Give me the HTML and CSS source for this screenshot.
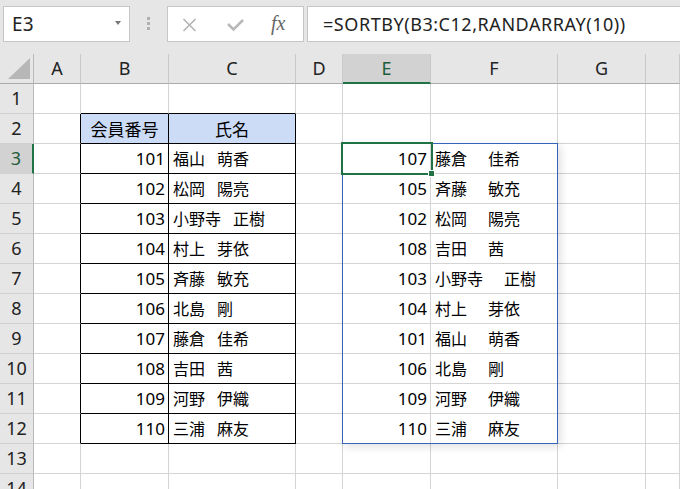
FILE: index.html
```html
<!DOCTYPE html>
<html lang="ja">
<head>
<meta charset="utf-8">
<title>SORTBY</title>
<link rel="stylesheet" href="styles.css">
</head>
<body>
<div class="bar">
  <div class="namebox"><span class="ref">E3</span><span class="caret"></span></div>
  <div class="grip"><i></i><i></i><i></i></div>
  <div class="fxbox">
    <svg class="ic-x" width="15" height="14" viewBox="0 0 15 14"><path d="M1.5 1 L13.5 13 M13.5 1 L1.5 13" stroke="#b3b3b3" stroke-width="1.6" fill="none"/></svg>
    <svg class="ic-ok" width="17" height="14" viewBox="0 0 17 14"><path d="M1 6 L6.5 11.5 L16 2" stroke="#b8b8b8" stroke-width="2.6" fill="none"/></svg>
    <span class="fx">fx</span>
  </div>
  <div class="formula">=SORTBY(B3:C12,RANDARRAY(10))</div>
</div>
<div class="sheet">
  <div class="corner"><span class="tri"></span></div>
  <div class="ch">A</div><div class="ch">B</div><div class="ch">C</div><div class="ch">D</div><div class="ch sel">E</div><div class="ch">F</div><div class="ch">G</div><div class="ch"></div>

  <div class="rh">1</div><div class="c"></div><div class="c bb"></div><div class="c bb"></div><div class="c"></div><div class="c"></div><div class="c"></div><div class="c"></div><div class="c"></div>

  <div class="rh">2</div><div class="c br"></div><div class="c jp th br bb">会員番号</div><div class="c jp th br bb">氏名</div><div class="c"></div><div class="c"></div><div class="c"></div><div class="c"></div><div class="c"></div>

  <div class="rh sel">3</div><div class="c br"></div><div class="c num br bb">101</div><div class="c jp br bb">福山 萌香</div><div class="c"></div><div class="c num anchor">107<div class="spill"></div><div class="active"><span class="handle"></span></div></div><div class="c jp wide">藤倉 佳希</div><div class="c"></div><div class="c"></div>

  <div class="rh">4</div><div class="c br"></div><div class="c num br bb">102</div><div class="c jp br bb">松岡 陽亮</div><div class="c"></div><div class="c num">105</div><div class="c jp wide">斉藤 敏充</div><div class="c"></div><div class="c"></div>

  <div class="rh">5</div><div class="c br"></div><div class="c num br bb">103</div><div class="c jp br bb">小野寺 正樹</div><div class="c"></div><div class="c num">102</div><div class="c jp wide">松岡 陽亮</div><div class="c"></div><div class="c"></div>

  <div class="rh">6</div><div class="c br"></div><div class="c num br bb">104</div><div class="c jp br bb">村上 芽依</div><div class="c"></div><div class="c num">108</div><div class="c jp wide">吉田 茜</div><div class="c"></div><div class="c"></div>

  <div class="rh">7</div><div class="c br"></div><div class="c num br bb">105</div><div class="c jp br bb">斉藤 敏充</div><div class="c"></div><div class="c num">103</div><div class="c jp wide">小野寺 正樹</div><div class="c"></div><div class="c"></div>

  <div class="rh">8</div><div class="c br"></div><div class="c num br bb">106</div><div class="c jp br bb">北島 剛</div><div class="c"></div><div class="c num">104</div><div class="c jp wide">村上 芽依</div><div class="c"></div><div class="c"></div>

  <div class="rh">9</div><div class="c br"></div><div class="c num br bb">107</div><div class="c jp br bb">藤倉 佳希</div><div class="c"></div><div class="c num">101</div><div class="c jp wide">福山 萌香</div><div class="c"></div><div class="c"></div>

  <div class="rh">10</div><div class="c br"></div><div class="c num br bb">108</div><div class="c jp br bb">吉田 茜</div><div class="c"></div><div class="c num">106</div><div class="c jp wide">北島 剛</div><div class="c"></div><div class="c"></div>

  <div class="rh">11</div><div class="c br"></div><div class="c num br bb">109</div><div class="c jp br bb">河野 伊織</div><div class="c"></div><div class="c num">109</div><div class="c jp wide">河野 伊織</div><div class="c"></div><div class="c"></div>

  <div class="rh">12</div><div class="c br"></div><div class="c num br bb">110</div><div class="c jp br bb">三浦 麻友</div><div class="c"></div><div class="c num">110</div><div class="c jp wide">三浦 麻友</div><div class="c"></div><div class="c"></div>

  <div class="rh">13</div><div class="c"></div><div class="c"></div><div class="c"></div><div class="c"></div><div class="c"></div><div class="c"></div><div class="c"></div><div class="c"></div>

  <div class="rh">14</div><div class="c"></div><div class="c"></div><div class="c"></div><div class="c"></div><div class="c"></div><div class="c"></div><div class="c"></div><div class="c"></div>
</div>
</body>
</html>
```

FILE: styles.css
```css
html, body {
  margin: 0;
  padding: 0;
  background: #ffffff;
  overflow: hidden;
}
body {
  width: 680px;
  height: 489px;
  font-family: "Noto Sans", "Noto Sans CJK JP", sans-serif;
  color: #000;
}

/* formula bar */
.bar {
  height: 54px;
  box-sizing: border-box;
  padding: 6px 0 0 3px;
  background: #e6e6e6;
  display: flex;
  align-items: flex-start;
  overflow: hidden;
}
.namebox {
  width: 127px;
  height: 36px;
  box-sizing: border-box;
  border: 1px solid #c6c6c6;
  background: #fff;
  display: flex;
  align-items: center;
  justify-content: space-between;
  padding: 0 8px 0 8px;
}
.ref {
  font-size: 19px;
  color: #222;
  letter-spacing: 0.2px;
}
.caret {
  width: 0;
  height: 0;
  border-left: 3.5px solid transparent;
  border-right: 3.5px solid transparent;
  border-top: 4px solid #777;
  margin-top: -2px;
}
.grip {
  width: 37px;
  height: 36px;
  display: flex;
  flex-direction: column;
  align-items: center;
  padding-top: 11px;
  box-sizing: border-box;
  gap: 2px;
}
.grip i {
  display: block;
  width: 3px;
  height: 3px;
  background: #b0b0b0;
}
.fxbox {
  width: 137px;
  height: 36px;
  box-sizing: border-box;
  border: 1px solid #c6c6c6;
  background: #fff;
  display: flex;
  align-items: center;
  padding-left: 14px;
}
.ic-x { margin-top: 1px; }
.ic-ok { margin-left: 30px; margin-top: 2px; }
.fx {
  margin-left: 27px;
  font-family: "Liberation Serif", serif;
  font-style: italic;
  font-size: 20px;
  color: #666;
  margin-top: -2px;
}
.formula {
  flex: 1;
  height: 36px;
  box-sizing: border-box;
  border: 1px solid #c6c6c6;
  border-right: none;
  background: #fff;
  margin-left: 3px;
  padding-left: 15px;
  font-size: 18px;
  letter-spacing: 0.55px;
  line-height: 34px;
  color: #222;
  white-space: nowrap;
}

/* sheet */
.sheet {
  display: grid;
  grid-template-columns: 34px 47px 88px 127px 47px 88px 127px 88px 1fr;
  grid-template-rows: repeat(15, 30px);
  background: #fff;
}
.corner {
  background: #e6e6e6;
  border-right: 1px solid #b9b9b9;
  border-bottom: 1px solid #ababab;
  position: relative;
}
.tri {
  position: absolute;
  left: 8px;
  top: 4px;
  width: 0;
  height: 0;
  border-left: 22px solid transparent;
  border-bottom: 21px solid #b7b7b7;
}
.ch {
  background: #e6e6e6;
  border-right: 1px solid #c9c9c9;
  border-bottom: 1px solid #ababab;
  text-align: center;
  font-size: 18px;
  line-height: 29px;
  color: #222;
}
.ch.sel {
  background: #d2d2d2;
  border-bottom: 2px solid #217346;
  color: #1d5c3a;
}
.rh {
  background: #e6e6e6;
  border-right: 1px solid #b9b9b9;
  border-bottom: 1px solid #d0d0d0;
  text-align: center;
  font-size: 18px;
  line-height: 29px;
  color: #222;
}
.rh.sel {
  background: #d2d2d2;
  border-right: 2px solid #217346;
  color: #1d5c3a;
}
.c {
  border-right: 1px solid #d4d4d4;
  border-bottom: 1px solid #d4d4d4;
  font-size: 17px;
  line-height: 29px;
  white-space: nowrap;
  overflow: hidden;
}
.num {
  text-align: right;
  padding-right: 3px;
}
.jp {
  font-family: "Noto Sans CJK JP", sans-serif;
  font-size: 16px;
  padding-left: 4px;
  word-spacing: 8.5px;
}
.jp.wide {
  word-spacing: 17.5px;
}
.th {
  background: #ccdcf6;
  text-align: center;
  padding-left: 0;
  font-size: 17px;
}
.br { border-right-color: #000; }
.bb { border-bottom-color: #000; }

.anchor {
  position: relative;
  overflow: visible;
  z-index: 2;
}
.spill {
  position: absolute;
  left: -1px;
  top: -1px;
  width: 216px;
  height: 301px;
  box-sizing: border-box;
  border: 1px solid #3464b8;
  box-shadow: 3px 3px 8px rgba(0, 0, 0, 0.12);
  pointer-events: none;
}
.active {
  position: absolute;
  left: -2px;
  top: -2px;
  width: 92px;
  height: 33px;
  box-sizing: border-box;
  border: 2px solid #217346;
  pointer-events: none;
}
.handle {
  position: absolute;
  right: -4px;
  bottom: -4px;
  width: 5px;
  height: 5px;
  background: #217346;
  border: 1px solid #fff;
}
```
